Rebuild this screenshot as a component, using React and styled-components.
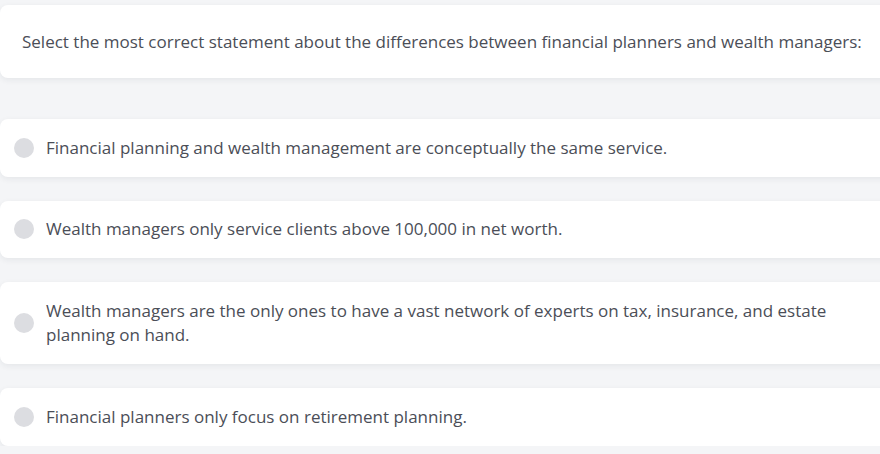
import React from "react";
import styled, { createGlobalStyle } from "styled-components";

const GlobalStyle = createGlobalStyle`
  html, body {
    margin: 0;
    padding: 0;
    background: #f4f5f7;
  }
  body {
    font-family: "Open Sans", "Noto Sans", sans-serif;
    color: #4b4e57;
  }
`;

const options = [
  "Financial planning and wealth management are conceptually the same service.",
  "Wealth managers only service clients above 100,000 in net worth.",
  "Wealth managers are the only ones to have a vast network of experts on tax, insurance, and estate planning on hand.",
  "Financial planners only focus on retirement planning.",
];

const Page = () => {
  return (
    <Wrapper>
      <GlobalStyle />
      <Question>
        Select the most correct statement about the differences between
        financial planners and wealth managers:
      </Question>
      <OptionList>
        {options.map((text) => (
          <Option key={text}>
            <Radio />
            <OptionText>{text}</OptionText>
          </Option>
        ))}
      </OptionList>
    </Wrapper>
  );
};

const Wrapper = styled.main`
  width: 900px;
  padding-top: 5px;
  overflow: hidden;
`;

const Card = styled.div`
  background: #ffffff;
  border-radius: 8px;
  box-shadow: 0 2px 6px rgba(30, 40, 60, 0.07);
`;

const Question = styled(Card)`
  padding: 26px 22px;
  font-size: 17px;
  line-height: 21px;
`;

const OptionList = styled.div`
  display: flex;
  flex-direction: column;
  gap: 24px;
  margin-top: 41px;
`;

const Option = styled(Card)`
  display: flex;
  align-items: center;
  gap: 12px;
  padding: 16.5px 56px 16.5px 14px;
`;

const Radio = styled.span`
  flex: none;
  width: 20px;
  height: 20px;
  border-radius: 50%;
  background: #dcdde1;
`;

const OptionText = styled.span`
  font-size: 17px;
  line-height: 24.5px;
`;

export default function App() {
  return <Page />;
}
